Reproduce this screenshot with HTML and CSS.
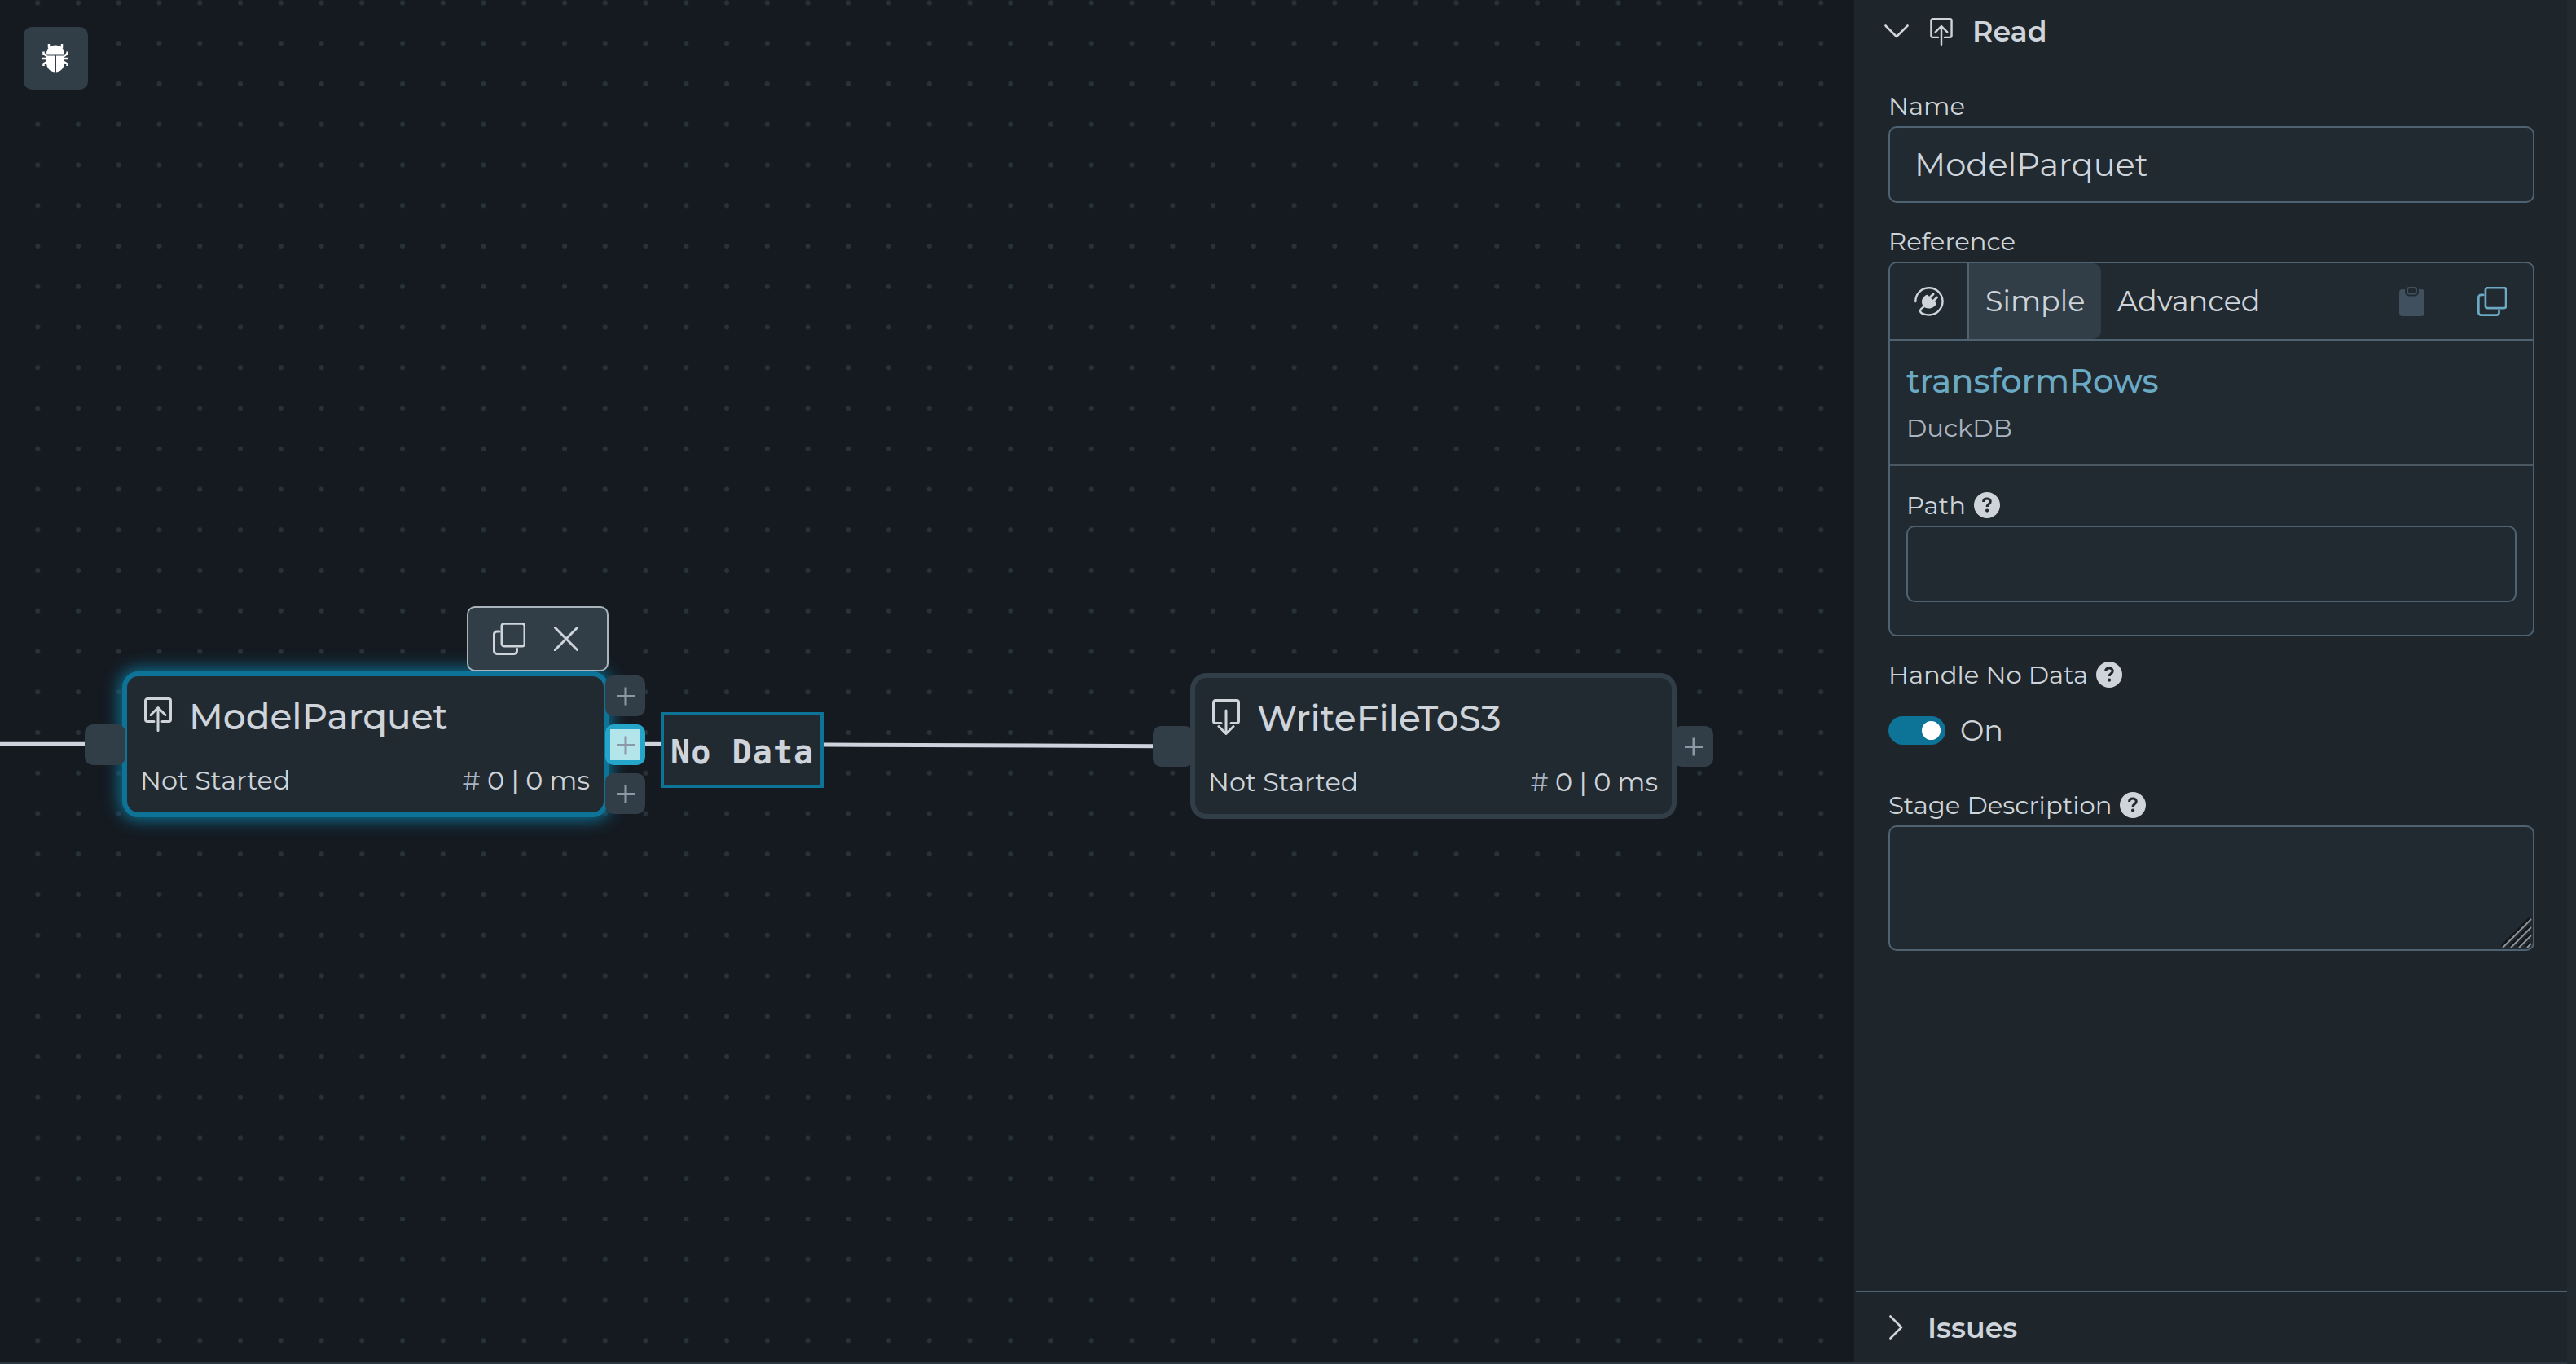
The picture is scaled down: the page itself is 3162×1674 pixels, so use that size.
FILE: index.html
```html
<!DOCTYPE html>
<html lang="en">
<head>
    <meta charset="UTF-8">
    <title>Pipeline</title>
    <link rel="stylesheet" href="styles.css">
</head>
<body>
    <svg class="sprite" width="0" height="0">
        <symbol id="icon-read" viewBox="0 0 34 42">
            <path d="M12 29.5H4a2.5 2.5 0 0 1-2.5-2.5V4a2.5 2.5 0 0 1 2.5-2.5h26a2.5 2.5 0 0 1 2.5 2.5v23a2.5 2.5 0 0 1-2.5 2.5h-8M17 40.5V13M8 21.5l9-9 9 9"/>
        </symbol>
        <symbol id="icon-write" viewBox="0 0 34 44">
            <path d="M11 29.5H4a2.5 2.5 0 0 1-2.5-2.5V4a2.5 2.5 0 0 1 2.5-2.5h26a2.5 2.5 0 0 1 2.5 2.5v23a2.5 2.5 0 0 1-2.5 2.5h-7M17 14v28M8 33.5l9 9 9-9"/>
        </symbol>
        <symbol id="icon-copy" viewBox="0 0 40 40">
            <rect x="11" y="1.2" width="28" height="27.8" rx="3"/>
            <path d="M8 11H5a3.5 3.5 0 0 0-3.5 3.5V35a3.5 3.5 0 0 0 3.5 3.5h21a3.5 3.5 0 0 0 3.5-3.5v-3"/>
        </symbol>
        <symbol id="icon-help" viewBox="0 0 32 32">
            <circle cx="16" cy="16" r="16" fill="#ced4da" stroke="none"/>
            <path d="M11.5 12c.2-2.7 2-4 4.5-4s4.3 1.4 4.3 3.5c0 3-4.1 3-4.1 6.5" fill="none" stroke="#20272e" stroke-width="3"/>
            <circle cx="16.1" cy="22.6" r="2.1" fill="#20272e" stroke="none"/>
        </symbol>
    </svg>

    <div class="app">
        <main class="canvas">
            <svg class="edges" width="2276" height="1672">
                <defs>
                    <pattern id="dots" x="21.4" y="-21.4" width="49.75" height="49.75" patternUnits="userSpaceOnUse">
                        <circle cx="24.9" cy="24.9" r="3"/>
                    </pattern>
                </defs>
                <rect width="2276" height="1672" fill="url(#dots)"/>
                <path d="M0 913.3H110M785 913.3C1000 913.3 1200 915.7 1420 915.7"/>
            </svg>

            <button class="debug-btn">
                <svg width="32" height="35" viewBox="0 0 32 35">
                    <path class="legs" d="M8 0v4l2 2M24 0v4l-2 2M1.5 9.5v2.5l4 3M30.5 9.5v2.5l-4 3M0 18h6M32 18h-6M1.5 27v-2.5l4-2.5M30.5 27v-2.5l-4-2.5"/>
                    <path class="shell" d="M5 12.5C5 5 10 1.5 16 1.5S27 5 27 12.5zM5 14.5h10V34.5C9 34 5 29 5 23zM17 14.5h10V23c0 6-4 11-10 11.5z"/>
                </svg>
            </button>

            <div class="node-toolbar">
                <svg class="icon" width="40" height="40"><use href="#icon-copy"/></svg>
                <svg class="icon" width="30" height="30" viewBox="0 0 30 30"><path d="M1 1l28 28M29 1L1 29"/></svg>
            </div>

            <div class="node node-model selected">
                <div class="node-head">
                    <svg class="icon" width="34" height="42"><use href="#icon-read"/></svg>
                    <span class="node-title">ModelParquet</span>
                </div>
                <div class="node-foot">
                    <span>Not Started</span>
                    <span><span class="hash">#</span> 0 | 0 ms</span>
                </div>
                <div class="port port-in"></div>
                <div class="ports-out">
                    <div class="port"></div>
                    <div class="port active"></div>
                    <div class="port"></div>
                </div>
            </div>

            <div class="edge-label">No Data</div>

            <div class="node node-write">
                <div class="node-head">
                    <svg class="icon" width="34" height="44"><use href="#icon-write"/></svg>
                    <span class="node-title">WriteFileToS3</span>
                </div>
                <div class="node-foot">
                    <span>Not Started</span>
                    <span><span class="hash">#</span> 0 | 0 ms</span>
                </div>
                <div class="port port-in"></div>
                <div class="ports-out">
                    <div class="port"></div>
                </div>
            </div>
        </main>

        <aside class="panel">
            <div class="panel-head">
                <svg class="icon chevron" width="30" height="17" viewBox="0 0 30 17"><path d="M1.5 1.5L15 15 28.5 1.5"/></svg>
                <svg class="icon" width="28" height="34"><use href="#icon-read"/></svg>
                <h2>Read</h2>
            </div>

            <div class="panel-body">
                <div class="field">
                    <label class="label">Name</label>
                    <div class="input">ModelParquet</div>
                </div>

                <div class="field">
                    <label class="label">Reference</label>
                    <div class="ref-box">
                        <div class="ref-tabs">
                            <div class="ref-plug">
                                <svg class="icon" width="36" height="36" viewBox="0 0 36 36">
                                    <path class="cable" d="M1.3 18A16.6 16.6 0 1 1 20 34.3C14 35 7 33 7 29.5 7 28 9 26 12 24"/>
                                    <path class="plug" d="M16 10l10.5 9.5c1 1.5-1.5 5.5-6.5 6.7-6 1.3-11-2.2-11-7.7 0-4 1.5-4.5 3-6.5 1.5-1.5 3-2.5 4-2z"/>
                                    <path d="M19 13l4-4M23.5 17l4-4"/>
                                </svg>
                            </div>
                            <div class="tab tab-active">Simple</div>
                            <div class="tab">Advanced</div>
                            <div class="ref-actions">
                                <svg class="clipboard" width="31" height="36" viewBox="0 0 31 36">
                                    <path d="M4 3h3v3.5a5 5 0 0 0 5 5h7a5 5 0 0 0 5-5V3h3a4 4 0 0 1 4 4v25a4 4 0 0 1-4 4H4a4 4 0 0 1-4-4V7a4 4 0 0 1 4-4z"/>
                                    <rect x="10" y="1" width="11" height="7.5" rx="2.5"/>
                                </svg>
                                <svg class="icon copy" width="36" height="36"><use href="#icon-copy"/></svg>
                            </div>
                        </div>
                        <div class="ref-conn">
                            <div class="conn-name">transformRows</div>
                            <div class="conn-type">DuckDB</div>
                        </div>
                        <div class="ref-path">
                            <label class="label">Path <svg width="32" height="32"><use href="#icon-help"/></svg></label>
                            <div class="input"></div>
                        </div>
                    </div>
                </div>

                <label class="label">Handle No Data <svg width="32" height="32"><use href="#icon-help"/></svg></label>
                <div class="switch-row">
                    <div class="switch"></div>
                    <span>On</span>
                </div>

                <div class="field">
                    <label class="label">Stage Description <svg width="32" height="32"><use href="#icon-help"/></svg></label>
                    <div class="textarea">
                        <svg class="grip" width="38" height="38" viewBox="0 0 38 38">
                            <path class="grip-dark" d="M1 35L35 1M11 35L35 11M21 35L35 21M31 35L35 31"/>
                            <path class="grip-light" d="M2 37L37 2M12 37L37 12M22 37L37 22M32 37L37 32"/>
                        </svg>
                    </div>
                </div>
            </div>

            <div class="panel-issues">
                <svg class="icon chevron" width="17" height="30" viewBox="0 0 17 30"><path d="M1.5 1.5L15 15 1.5 28.5"/></svg>
                <h2>Issues</h2>
            </div>
        </aside>
    </div>
</body>
</html>
```
FILE: styles.css
```css
* {
    box-sizing: border-box;
}

body {
    margin: 0;
    background-color: #2a343e;
    color: #ced4da;
    font-family: Montserrat, Inter, sans-serif;
    font-size: 30.7px;
}

h2 {
    margin: 0;
    font-size: 34.8px;
    font-weight: 600;
}

svg {
    display: block;
    flex: none;
}

.sprite {
    position: absolute;
}

.icon {
    fill: none;
    stroke: #ced4da;
    stroke-width: 3;
    stroke-linecap: round;
    stroke-linejoin: round;
}

.app {
    display: flex;
    height: 1674px;
    padding: 0 11px 2px 0;
    background: linear-gradient(#222a31, #222a31) right / 11px 100% no-repeat;
}

/* canvas */
.canvas {
    position: relative;
    width: 2276px;
    height: 1672px;
    overflow: hidden;
    background-color: #151a21;
}

.edges {
    position: absolute;
    left: 0;
    top: 0;
    fill: none;
    stroke: #ced2dc;
    stroke-width: 5;
}

.edges rect {
    stroke: none;
}

.edges circle {
    fill: #28323a;
    stroke: none;
}

.debug-btn {
    position: absolute;
    left: 29px;
    top: 33px;
    width: 79px;
    height: 77px;
    display: flex;
    align-items: center;
    justify-content: center;
    padding: 0 1px 0 0;
    border: 0;
    border-radius: 10px;
    background-color: #323e47;
}

.debug-btn .shell {
    fill: #fff;
}

.debug-btn .legs {
    fill: none;
    stroke: #fff;
    stroke-width: 2.5;
}

.node {
    position: absolute;
    width: 597px;
    height: 179px;
    padding: 20px 17px 0 16px;
    border: 6px solid #323e47;
    border-radius: 20px;
    background-color: #222a31;
}

.node-model {
    left: 150px;
    top: 824px;
}

.node-write {
    left: 1461px;
    top: 826px;
}

.selected {
    border-color: #0d7498;
    box-shadow: 0 0 20px 3px #0d7498;
}

.node-head {
    display: flex;
    align-items: flex-start;
    gap: 21px;
    height: 90px;
    padding: 6px 0 0 5px;
}

.node-title {
    font-size: 43.8px;
    font-weight: 500;
    line-height: 47px;
}

.node-foot {
    display: flex;
    justify-content: space-between;
    font-size: 31.9px;
    line-height: 36px;
}

.hash {
    color: #a9b4c4;
}

.port {
    position: relative;
    flex: none;
    width: 49px;
    height: 50px;
    border-radius: 10px;
    background-color: #323e47;
}

.port-in {
    position: absolute;
    left: -52px;
    top: 59px;
    width: 50px;
}

.ports-out {
    position: absolute;
    right: -51px;
    top: 0;
    height: 168px;
    display: flex;
    flex-direction: column;
    justify-content: center;
    gap: 10px;
}

.ports-out .port::before,
.ports-out .port::after {
    content: "";
    position: absolute;
    left: 14px;
    top: 24px;
    width: 22px;
    height: 3px;
    background-color: #8b99a6;
}

.ports-out .port::after {
    transform: rotate(90deg);
}

.ports-out .active {
    background: linear-gradient(#b4e5ea, #b4e5ea) center / 37px 38px no-repeat #26a5cb;
}

.node-toolbar {
    position: absolute;
    left: 573px;
    top: 744px;
    width: 174px;
    height: 80px;
    display: flex;
    align-items: center;
    gap: 35px;
    padding-left: 30px;
    border: 2px solid #aab4bd;
    border-radius: 10px;
    background-color: #323e47;
    z-index: 1;
}

.edge-label {
    position: absolute;
    left: 811px;
    top: 874px;
    width: 200px;
    height: 93px;
    padding-left: 8px;
    border: 4px solid #0d7498;
    background-color: #222a31;
    font-family: "DejaVu Sans Mono", monospace;
    font-size: 40px;
    font-weight: 700;
    line-height: 90px;
    letter-spacing: 1.1px;
    white-space: nowrap;
}

/* side panel */
.panel {
    flex: 1;
    display: flex;
    flex-direction: column;
    background-color: #1e252b;
}

.panel-head {
    display: flex;
    align-items: center;
    height: 77px;
    padding-left: 37px;
}

.panel-head .icon + .icon {
    margin: 0 24px 0 26px;
}

.chevron {
    stroke-width: 2.6;
}

.panel-body {
    flex: 1;
    padding: 35px 40px 0 42px;
}

.field {
    margin-bottom: 29px;
}

.label {
    display: flex;
    align-items: center;
    gap: 10px;
    height: 36px;
    margin-bottom: 7px;
    line-height: 36px;
}

.input {
    height: 94px;
    padding-left: 30px;
    border: 2px solid #4e6272;
    border-radius: 10px;
    background-color: #222a31;
    font-size: 40px;
    line-height: 90px;
}

.ref-box {
    height: 460px;
    border: 2px solid #4e6272;
    border-radius: 10px;
    background-color: #222a31;
}

.ref-tabs {
    display: flex;
    height: 95px;
    border-bottom: 2px solid #4e6272;
    font-size: 35px;
    line-height: 94px;
}

.ref-plug {
    display: flex;
    align-items: center;
    width: 97px;
    padding-left: 30px;
    border-right: 2px solid #4e6272;
}

.cable {
    stroke-width: 2.4;
}

.plug {
    fill: #ced4da;
    stroke: none;
}

.tab {
    width: 162px;
    padding-left: 20px;
}

.tab-active {
    border-radius: 0 10px 10px 0;
    background-color: #323e47;
}

.ref-actions {
    flex: 1;
    display: flex;
    align-items: center;
    justify-content: flex-end;
    gap: 65px;
    padding-right: 32px;
}

.clipboard path {
    fill: #40505e;
}

.clipboard rect {
    fill: none;
    stroke: #40505e;
    stroke-width: 2;
}

.copy {
    stroke: #6baac4;
}

.ref-conn {
    height: 154px;
    padding: 25px 20px 0;
    border-bottom: 2px solid #4b5761;
}

.conn-name {
    margin-bottom: 14px;
    color: #6baac4;
    font-size: 40px;
    font-weight: 500;
    line-height: 50px;
}

.conn-type {
    color: #a9b4be;
    line-height: 36px;
}

.ref-path {
    padding: 30px 20px 0;
}

.switch-row {
    display: flex;
    align-items: center;
    gap: 18px;
    height: 101px;
    margin: -7px 0 23px;
    font-size: 35px;
}

.switch {
    width: 70px;
    height: 35px;
    padding: 6px;
    border-radius: 18px;
    background-color: #0d7498;
}

.switch::after {
    content: "";
    display: block;
    width: 23px;
    height: 23px;
    margin-left: auto;
    border-radius: 50%;
    background-color: #fff;
}

.textarea {
    position: relative;
    height: 154px;
    border: 2px solid #4e6272;
    border-radius: 10px;
    background-color: #222a31;
}

.grip {
    position: absolute;
    right: 1px;
    bottom: 1px;
    fill: none;
}

.grip-dark {
    stroke: #12161b;
    stroke-width: 3;
}

.grip-light {
    stroke: #8d9295;
    stroke-width: 2;
}

.panel-issues {
    display: flex;
    align-items: center;
    gap: 30px;
    height: 88px;
    margin-left: 2px;
    padding-left: 41px;
    border-top: 2px solid #4e6272;
}
```
